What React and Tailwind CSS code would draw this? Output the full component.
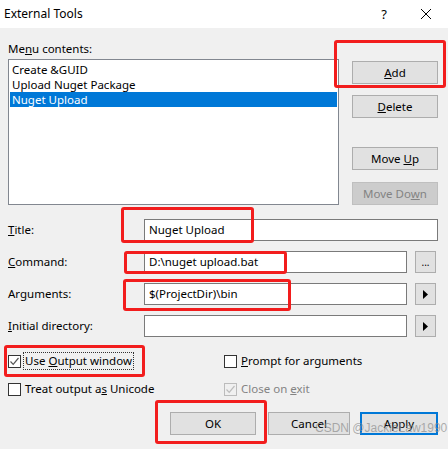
import React from 'react';

const font = "font-['Segoe_UI','Noto_Sans','Open_Sans',sans-serif]";

function Btn({ children, className = '', disabled }) {
    return (
        <div
            className={
                'h-[23px] flex items-center justify-center border ' +
                (disabled
                    ? 'bg-[#cccccc] border-[#bfbfbf] text-[#838383] '
                    : 'bg-[#e1e1e1] border-[#adadad] text-black ') +
                className
            }
        >
            <span>{children}</span>
        </div>
    );
}

function Arrow() {
    return (
        <svg width="5" height="9" viewBox="0 0 5 9">
            <polygon points="0,0 5,4.5 0,9" fill="#000" />
        </svg>
    );
}

function Check({ checked, disabled }) {
    return (
        <div
            className={
                'w-[13px] h-[13px] border flex items-center justify-center shrink-0 ' +
                (disabled ? 'border-[#bcbcbc] bg-[#f0f0f0]' : 'border-[#333333] bg-white')
            }
        >
            {checked && (
                <svg width="11" height="11" viewBox="0 0 11 11">
                    <path
                        d="M1.5 5.5 L4.2 8.3 L9.5 2"
                        fill="none"
                        stroke={disabled ? '#bcbcbc' : '#555555'}
                        strokeWidth="1.2"
                    />
                </svg>
            )}
        </div>
    );
}

function FormRow({ label, children }) {
    return (
        <div className="flex items-center h-[22px]">
            <div className="w-[136px]">{label}</div>
            {children}
        </div>
    );
}

export default function App() {
    return (
        <div className={'relative w-[448px] h-[449px] bg-[#f0f0f0] overflow-hidden text-[11.5px] text-black leading-[16px] ' + font}>
            {/* title bar */}
            <div className="h-[28px] bg-white flex items-center pl-[4px]">
                <span className="text-[12px]">External Tools</span>
                <span className="ml-auto mr-[33px] text-[13px]">?</span>
                <svg className="mr-[16px]" width="12" height="12" viewBox="0 0 12 12">
                    <path d="M1 1 L11 11 M11 1 L1 11" stroke="#000" strokeWidth="1" />
                </svg>
            </div>

            <div className="pl-[8px] pr-[10px] pt-[13px]">
                <div className="flex">
                    <div className="w-[331px]">
                        <div className="h-[16px] mb-[2px]">
                            Me<u>n</u>u contents:
                        </div>
                        <div className="h-[146px] bg-white border border-[#828790] pt-[2px] px-[1px] leading-[15px]">
                            <div className="h-[15px] pl-[2px]">Create &amp;GUID</div>
                            <div className="h-[15px] pl-[2px]">Upload Nuget Package</div>
                            <div className="h-[15px] pl-[2px] bg-[#0078d7] text-white">Nuget Upload</div>
                        </div>
                    </div>
                    <div className="ml-[13px] w-[86px] pt-[20px] flex flex-col">
                        <Btn>
                            <u>A</u>dd
                        </Btn>
                        <Btn className="mt-[11px]">
                            <u>D</u>elete
                        </Btn>
                        <Btn className="mt-[29px]">
                            Move <u>U</u>p
                        </Btn>
                        <Btn className="mt-[12px]" disabled>
                            Move Do<u>w</u>n
                        </Btn>
                    </div>
                </div>

                <div className="mt-[14px] flex flex-col gap-[10px]">
                    <FormRow label={<><u>T</u>itle:</>}>
                        <div className="flex-1 h-[22px] bg-white border border-[#7a7a7a] flex items-center px-[4px]">
                            Nuget Upload
                        </div>
                    </FormRow>
                    <FormRow label={<><u>C</u>ommand:</>}>
                        <div className="w-[263px] h-[22px] bg-white border border-[#7a7a7a] flex items-center px-[4px]">
                            D:\nuget upload.bat
                        </div>
                        <Btn className="ml-[8px] w-[21px] !h-[22px] text-[10px]">...</Btn>
                    </FormRow>
                    <FormRow label={<>Ar<u>g</u>uments:</>}>
                        <div className="w-[263px] h-[22px] bg-white border border-[#7a7a7a] flex items-center px-[4px]">
                            $(ProjectDir)\bin
                        </div>
                        <Btn className="ml-[8px] w-[21px] !h-[22px]">
                            <Arrow />
                        </Btn>
                    </FormRow>
                    <FormRow label={<><u>I</u>nitial directory:</>}>
                        <div className="w-[263px] h-[22px] bg-white border border-[#7a7a7a]"></div>
                        <Btn className="ml-[8px] w-[21px] !h-[22px]">
                            <Arrow />
                        </Btn>
                    </FormRow>
                </div>

                <div className="mt-[16px] grid grid-cols-[216px_1fr] gap-y-[12px]">
                    <div className="flex items-center h-[16px]">
                        <Check checked />
                        <span className="ml-[2px] px-[1px] border border-dotted border-[#333333]">
                            Use <u>O</u>utput window
                        </span>
                    </div>
                    <div className="flex items-center h-[16px]">
                        <Check />
                        <span className="ml-[4px]">
                            <u>P</u>rompt for arguments
                        </span>
                    </div>
                    <div className="flex items-center h-[16px]">
                        <Check />
                        <span className="ml-[4px]">
                            Treat output a<u>s</u> Unicode
                        </span>
                    </div>
                    <div className="flex items-center h-[16px]">
                        <Check checked disabled />
                        <span className="ml-[4px] text-[#838383]">
                            Close on <u>e</u>xit
                        </span>
                    </div>
                </div>

                <div className="mt-[15px] flex justify-end">
                    <Btn className="w-[86px]">OK</Btn>
                    <Btn className="ml-[12px] w-[82px]">Cancel</Btn>
                    <Btn className="ml-[10px] w-[78px] !border-2 !border-[#0078d7]">Apply</Btn>
                </div>
            </div>

            {/* red highlight boxes */}
            <div className="absolute left-[334px] top-[40px] w-[112px] h-[48px] border-[3px] border-[#f21d1d] rounded-[3px]"></div>
            <div className="absolute left-[121px] top-[207px] w-[133px] h-[36px] border-[3px] border-[#f21d1d] rounded-[3px]"></div>
            <div className="absolute left-[124px] top-[251px] w-[163px] h-[23px] border-[3px] border-[#f21d1d] rounded-[3px]"></div>
            <div className="absolute left-[123px] top-[279px] w-[168px] h-[32px] border-[3px] border-[#f21d1d] rounded-[3px]"></div>
            <div className="absolute left-[4px] top-[345px] w-[141px] h-[32px] border-[3px] border-[#f21d1d] rounded-[3px]"></div>
            <div className="absolute left-[155px] top-[400px] w-[112px] h-[44px] border-[3px] border-[#f21d1d] rounded-[3px]"></div>

            {/* watermark */}
            <div className="absolute left-[315px] top-[421px] text-[12px] leading-[14px] text-[#8c8c8c]/70 font-['Liberation_Sans',sans-serif]">
                CSDN @JackieLaw1990
            </div>
        </div>
    );
}
